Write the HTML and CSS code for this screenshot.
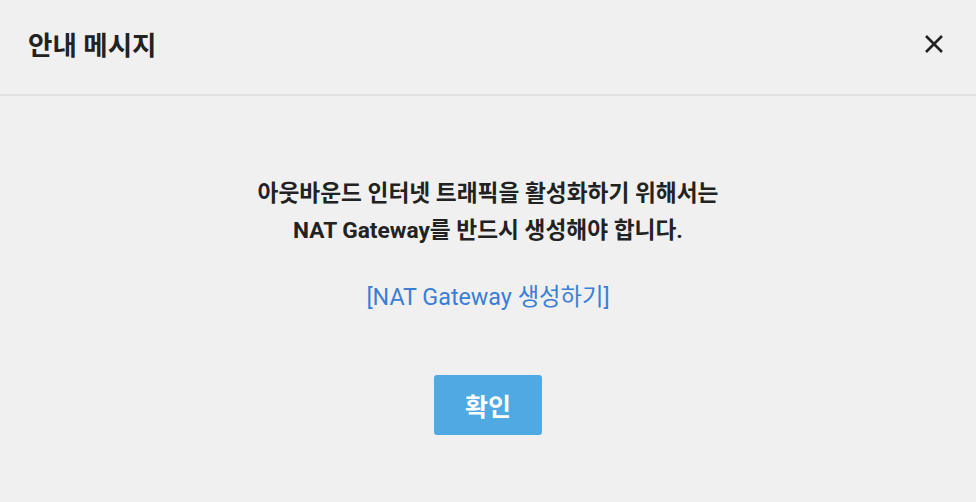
FILE: index.html
```html
<!DOCTYPE html>
<html lang="ko">
<head>
<meta charset="utf-8">
<link rel="stylesheet" href="styles.css">
</head>
<body>
<div class="dialog">
  <header class="header">
    <h1 class="title">안내 메시지</h1>
    <button class="close" aria-label="닫기">
      <svg width="20" height="20" viewBox="0 0 20 20"><path d="M2 2L18 18M18 2L2 18" stroke="#222" stroke-width="2.6" fill="none"/></svg>
    </button>
  </header>
  <main class="body">
    <p class="message">아웃바운드 인터넷 트래픽을 활성화하기 위해서는<br>NAT Gateway를 반드시 생성해야 합니다.</p>
    <a class="link" href="#">[NAT Gateway 생성하기]</a>
    <button class="confirm">확인</button>
  </main>
</div>
</body>
</html>
```
FILE: styles.css
```css
html, body {
  margin: 0;
  padding: 0;
  background: #f0f0f0;
  font-family: Roboto, "Noto Sans CJK KR", sans-serif;
  color: #222;
}
.dialog {
  width: 976px;
  height: 502px;
  display: flex;
  flex-direction: column;
}
.header {
  border-bottom: 2px solid #e2e2e2;
  display: flex;
  align-items: center;
  justify-content: space-between;
  padding: 0 32px 0 28px;
  box-sizing: border-box;
  height: 96px;
}
.title {
  margin: 0;
  font-size: 26.5px;
  font-weight: 700;
  color: #222;
  margin-top: -8px;
}
.close {
  background: none;
  border: 0;
  padding: 0;
  width: 20px;
  height: 20px;
  display: flex;
  margin-top: -6px;
}
.body {
  display: flex;
  flex-direction: column;
  align-items: center;
  padding-top: 79px;
}
.message {
  margin: 0;
  text-align: center;
  font-size: 22.7px;
  font-weight: 700;
  line-height: 37px;
  color: #222;
}
.link {
  margin-top: 33px;
  font-size: 23.3px;
  line-height: 30px;
  color: #3a7fd4;
  text-decoration: none;
}
.confirm {
  margin-top: 63px;
  width: 108px;
  height: 60px;
  border: 0;
  border-radius: 3px;
  background: #4fa9e3;
  color: #fff;
  font-family: Roboto, "Noto Sans CJK KR", sans-serif;
  font-size: 25px;
  font-weight: 700;
}
```
